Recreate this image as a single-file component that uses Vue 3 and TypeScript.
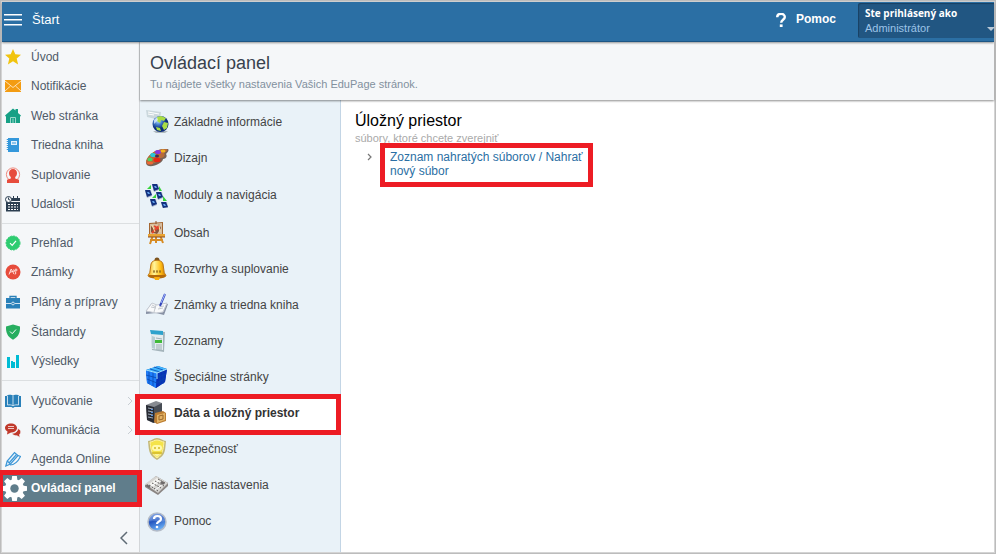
<script setup lang="ts">
interface NavItem {
  label: string
  icon: string
  more?: boolean
  active?: boolean
}

interface PanelItem {
  label: string
  icon: string
  tall?: boolean
  active?: boolean
}

const groups: NavItem[][] = [
  [
    {
      label: 'Úvod',
      icon: '<path fill="#f1c40f" d="M8 0l2.3 5.3 5.7.5-4.300 3.800 1.400 5.900L8 12.300 2.900 15.500l1.400-5.900L0 5.800l5.700-.5z"/>',
    },
    {
      label: 'Notifikácie',
      icon: '<path fill="#f39c12" d="M0 2h16v12H0z"/><path fill="none" stroke="#fff3df" stroke-width=".8" d="M0 3l8 6.500L16 3M0 13l5.500-5M16 13l-5.500-5"/>',
    },
    {
      label: 'Web stránka',
      icon: '<path fill="#16a085" d="M8 .5l2.500 2V1H13v4l3 2.600-1 1.200V15H1V8.800L0 7.600z"/><path fill="none" stroke="#9bd8cb" d="M5.500 15V9.500h5V15M8 10.500v4.500"/>',
    },
    {
      label: 'Triedna kniha',
      icon: '<path fill="#3498db" d="M3 1h11v14H3z"/><path stroke="#3498db" stroke-width="1.500" stroke-dasharray="1 1" d="M2.500 2v12"/><path fill="#e3f1fb" d="M6 4h6v4H6z"/><path fill="#8cc4ec" d="M7 5h4v2H7z"/>',
    },
    {
      label: 'Suplovanie',
      icon: '<circle cx="8" cy="7.500" r="6.600" fill="none" stroke="#ee8a7e"/><path fill="#e74c3c" d="M8 2c2.500 0 4 1.700 4 4 0 2-.7 3.200-1.800 4v1.500l3.800 1.300V16H2v-3.200l3.800-1.300V10C4.700 9.200 4 8 4 6c0-2.300 1.500-4 4-4z"/>',
    },
    {
      label: 'Udalosti',
      icon: '<path fill="#2c3e50" d="M2 2h13v3H2zM1 6h14v9.500H1z"/><path stroke="#fff" d="M3 8.500h10M3 11h10M3 13.500h10" stroke-dasharray="2 1"/><circle cx="3.500" cy="3.500" r="3" fill="#f5f7f9" stroke="#2c3e50"/><path stroke="#2c3e50" fill="none" d="M3.500 1.500v2l1.500.5M8.500 0v3M12.500 0v3"/>',
    },
  ],
  [
    {
      label: 'Prehľad',
      icon: '<circle cx="8" cy="8" r="7" fill="#2ecc71" stroke="#2ecc71" stroke-dasharray="2 1"/><path fill="none" stroke="#fff" stroke-width="1.200" d="M5 8.200l2.200 2.200L11 5.800"/>',
    },
    {
      label: 'Známky',
      icon: '<circle cx="8" cy="8" r="7.500" fill="#e74c3c"/><path fill="none" stroke="#ffe1dd" d="M4 10.500l2.200-5.500L9 10M4.800 8.300L9.200 7M8.500 5.500L11 9l-1 1.500M9.500 6h3M11 4.500v3"/>',
    },
    {
      label: 'Plány a prípravy',
      icon: '<path fill="none" stroke="#2980b9" stroke-width="1.300" d="M5 4V2.500h6V4"/><path fill="#2980b9" d="M1 4h14v10.500H1z"/><path stroke="#cfe2f0" fill="none" d="M1 9.500h5M10 9.500h5"/><circle cx="8" cy="9.500" r="1.400" fill="none" stroke="#cfe2f0"/>',
    },
    {
      label: 'Štandardy',
      icon: '<path fill="#27ae60" d="M8 .5l7 2c.3 6-1.500 10.500-7 13.200C2.500 13 .7 8.500 1 2.500z"/><path fill="none" stroke="#fff" d="M5 7.500l2.200 2.200L11 5.500"/>',
    },
    {
      label: 'Výsledky',
      icon: '<path fill="#00bcd4" d="M2 4h3v11H2zM6 8h2v7H6zM8 9h2v6H8zM11 2h3v13h-3z"/>',
    },
  ],
  [
    {
      label: 'Vyučovanie',
      more: true,
      icon: '<path fill="#2980b9" d="M0 3h1.500L3 2c2-.6 4-.3 5 .8C9 1.700 11 1.400 13 2l1.500 1H16v11H9.500L8 15l-1.500-1H0z"/><path fill="none" stroke="#d5e7f3" stroke-width=".9" d="M2.500 3v9c2-.4 4-.2 5.500.8 1.500-1 3.500-1.200 5.500-.8V3M8 3v9.500"/>',
    },
    {
      label: 'Komunikácia',
      more: true,
      icon: '<path fill="#c0392b" d="M6 1.500c3.500 0 6 2 6 4.500s-2.500 4.500-6 4.500L2 12.500l.5-3C1 8.700 0 7.500 0 6c0-2.500 2.500-4.500 6-4.500z"/><path stroke="#f0c8c4" d="M3 4.500h6M3 6.500h6"/><path fill="#c0392b" stroke="#f5f7f9" stroke-width=".7" d="M12.800 6.500c2 .7 3 2 3 3.500 0 1-.5 1.800-1.300 2.500l.5 3-3-1.700c-2.500.2-4.500-.8-5-2.500 3.500 0 5.800-2 5.800-4.800z"/>',
    },
    {
      label: 'Agenda Online',
      icon: '<path fill="#e6f2fb" stroke="#3c96d6" stroke-width="1.200" d="M.8 15l1.400-5L9.500 1.500 13 4.500 5.500 13z"/><path fill="none" stroke="#3c96d6" stroke-width="1.200" d="M5 14c5 0 8-3.500 10.500-8.500L13 4.500M2.200 10L5.500 13M4.500 11.500l7-8"/>',
    },
    {
      label: 'Ovládací panel',
      active: true,
      icon: '<g fill="#fff"><circle cx="8" cy="8" r="6"/><path d="M6.500 0h3l.4 3H6.100zM6.500 16h3l.4-3H6.100zM0 6.500v3l3 .4V6.100zM16 6.500v3l-3 .4V6.100zM1.300 3.400l2.100-2.100 2.500 1.900-2.700 2.700zM14.700 12.600l-2.100 2.100-2.500-1.900 2.700-2.700zM12.600 1.300l2.100 2.100-1.900 2.500-2.700-2.700zM3.400 14.700l-2.100-2.100 1.900-2.500 2.700 2.700z"/></g><circle cx="8" cy="8" r="2.700" fill="#607d8b"/>',
    },
  ],
]

const panelItems: PanelItem[] = [
  {
    label: 'Základné informácie',
    icon: '<defs><radialGradient id="globe" cx=".35" cy=".3"><stop stop-color="#bfe2ff"/><stop offset=".5" stop-color="#437ccc"/><stop offset="1" stop-color="#0b2c79"/></radialGradient></defs><path fill="#cbd8dd" d="M1 0l15 2-1 8L2 7z"/><path stroke="#fff" d="M3 2l11 2M3 4l6 1"/><path fill="#aeb9bd" d="M8 21h15l-3 2h-9z"/><circle cx="15.500" cy="14" r="8" fill="url(#globe)"/><path fill="#a9dd45" d="M12 7l4-1 5 2-2 3-3-1-1 3-3-2zM19 12l4 1-1 5-3 2-2-4zM11 17l4 1 1 3-4-1z"/><path fill="#eef8ff" opacity=".7" d="M9 10l3-3 1 3-4 4z"/>',
  },
  {
    label: 'Dizajn',
    icon: '<path fill="#776256" d="M1 17C2 9 11 2 22 3c3 0 1 3-1 5 2 3-1 5-3 5 0 5-16 11-17 4z"/><path fill="#b86b38" d="M1 15C3 8 12 2 22 3c1 1-1 3-3 4 2 3-1 5-4 5-1 5-14 9-14 3z"/><ellipse cx="5" cy="13.500" rx="2.500" ry="2" fill="#4fcf62"/><ellipse cx="8" cy="9" rx="2.800" ry="2" fill="#28c8d8"/><ellipse cx="13" cy="6" rx="3" ry="2" fill="#8637de"/><ellipse cx="18" cy="5" rx="2.500" ry="1.500" fill="#f1b51d"/><ellipse cx="12" cy="14" rx="3.500" ry="2.200" fill="#e92713"/><ellipse cx="5" cy="17" rx="3" ry="1.500" fill="#ef6734"/><ellipse cx="12" cy="10" rx="2" ry="1.500" fill="#452e54"/>',
  },
  {
    label: 'Moduly a navigácia',
    tall: true,
    icon: '<g fill="#a9b5cc"><path d="M7 1l6-1 1 6-5 2zM0 7l6-1 1 6-5 2zM11 9l6-1 1 6-5 2zM5 16l6-1 1 6-5 2zM16 19l6-1 1 6-5 1z"/></g><g fill="#12317f"><path d="M7 0h5l2 5-5 2zM0 6h5l2 5-5 2zM11 8h5l2 5-5 2zM5 15h5l2 5-5 2zM16 18h5l2 5-5 1z"/></g><g fill="#61a1ec"><path d="M9 2h2l1 2h-2zM2 8h2l1 2H3zM13 10h2l1 2h-2zM7 17h2l1 2H8zM18 20h2l1 2h-2z"/></g><g fill="#37d43b"><path d="M2 5l4-4v4zM14 2l3 5h-3zM7 14l4-4v4zM18 12l4 5h-4z"/></g>',
  },
  {
    label: 'Obsah',
    icon: '<path fill="none" stroke="#d78c24" stroke-width="2" d="M8 14L5 23M15 14l3 8M11 13v9M5 19h13"/><path fill="#a46631" d="M4 2l14-1v14H4z"/><path fill="#d7bea0" d="M5 3l12-1v11L5 14z"/><path fill="#87553e" d="M6 5l5 4 3-6 2 4-4 6-6-2z"/><path stroke="#e3442b" stroke-width="2" d="M9 5l5 3M7 12l7-7"/><path stroke="#f6e1a3" d="M7 4l3 7M14 4l1 7"/><path fill="#eaa432" d="M3 13h17v3H3z"/><path stroke="#894b22" d="M3 16h17M11 0v3"/>',
  },
  {
    label: 'Rozvrhy a suplovanie',
    icon: '<defs><linearGradient id="bell"><stop stop-color="#fba30a"/><stop offset=".35" stop-color="#fff69c"/><stop offset=".7" stop-color="#ffbd16"/><stop offset="1" stop-color="#c97400"/></linearGradient></defs><circle cx="12" cy="3" r="2.500" fill="#7b521c"/><path fill="url(#bell)" stroke="#ba7615" d="M6 7c1-5 11-5 12 0l1 7c0 3 2 3 2 5-2 2-16 2-18 0 0-2 2-2 2-5z"/><path fill="#b36a0c" d="M4 18h16v2c-4 2-12 2-16 0z"/><path stroke="#8c641a" stroke-dasharray="2 1" d="M8 14h9M8 15h8"/><path fill="#f9ad10" d="M9 20h6l-1 3h-4z"/>',
  },
  {
    label: 'Známky a triedna kniha',
    icon: '<path fill="#8992a5" d="M1 18l5-7 6 1 11-1-4 11-8-2-10 1z"/><path fill="#f9fafb" stroke="#c5cad2" d="M1 18l6-8 5 2 10-2-4 9-7 1z"/><path stroke="#c3c8ce" d="M7 12l4 2M6 14l5 1M14 14l5-1M13 16l5-1M11 12l-2 7"/><path stroke="#3446ba" stroke-width="2" d="M20 1l-5 12"/><path stroke="#a1b7ff" d="M20 1l-4 9"/>',
  },
  {
    label: 'Zoznamy',
    icon: '<path fill="#a4b4bb" d="M6 2l14 1-1 20-12-2z"/><path fill="#e4edef" d="M6 2l12 1v18L7 20z"/><path fill="#2ea2cc" d="M5 1l13 1v4L6 5z"/><path fill="#b7cdd3" d="M7 7l3 1v12l-3-1z"/><path stroke="#9eafb6" d="M11 9l6 1M11 16h6M11 18h6M11 20h6"/><path fill="#40ba39" d="M10 11h7v3h-7z"/>',
  },
  {
    label: 'Špeciálne stránky',
    icon: '<path fill="#0645b5" d="M1 5l12-4 9 3-2 13-9 6L2 18z"/><path fill="#42b7ff" d="M1 5l12-4 9 3-10 4z"/><path fill="#1d7dfa" d="M1 5l11 3-1 15-9-5z"/><path fill="#0831b8" d="M12 8l10-4-2 13-9 6z"/><path fill="none" stroke="#0746b0" stroke-width=".8" d="M5 4l10 3v13M9 2l9 3v14M4 6v13M8 7v14M1 10l11 3 9-4M2 14l10 4 8-5"/><path stroke="#a4e3ff" d="M1 5l11 3 10-4M12 8v6"/>',
  },
  {
    label: 'Dáta a úložný priestor',
    active: true,
    icon: '<path fill="#878b91" d="M1 4l10-4 6 2v16L8 22l-6-3z"/><path fill="#282b33" d="M1 4l8 2v16l-7-3z"/><path fill="#484d55" d="M9 6l8-4v16l-8 4z"/><path stroke="#9ea9b8" d="M3 7l5 1M3 10l5 1M3 13l5 1M3 16l5 1"/><path stroke="#5790db" stroke-width="2" stroke-dasharray="1 2" d="M7 8v9"/><path fill="#bc7d32" d="M10 12l8-2 3 2v8l-9 3-3-2z"/><path fill="#e3b465" d="M12 14l8-2v7l-8 3z"/><path fill="none" stroke="#9b672d" d="M14 15l4-1v4l-4 1z"/>',
  },
  {
    label: 'Bezpečnosť',
    icon: '<path fill="#c3b877" d="M3 4c4 0 5-3 9-3s6 3 9 3c-1 9 0 14-9 19C3 18 4 12 3 4z"/><path fill="#f4e34a" stroke="#fff3a1" d="M5 5c3 0 4-2 7-2s5 2 7 2c-1 8-1 12-7 16-6-4-6-9-7-16z"/><rect x="7" y="8" width="10" height="6" rx="3" fill="#fff9ad"/><path stroke="#d3b929" stroke-width="1.500" d="M9 11h2M13 11h2M7 16h10"/><path fill="#f9f2a0" d="M9 17h6l-3 3z"/>',
  },
  {
    label: 'Ďalšie nastavenia',
    icon: '<path fill="#8a8583" d="M0 12L11 3l12 7v3L13 22 0 14z"/><path fill="#d6d5d2" d="M0 11L11 3l12 7-10 10z"/><path fill="#f2f1ed" d="M4 11l8-6 4 3-8 6z"/><path stroke="#5d5a58" stroke-dasharray="2 1" d="M4 12l9 6M7 10l9 5M10 8l9 5M13 6l7 4"/><path stroke="#fff" d="M5 14l8-6M10 17l8-6"/><path fill="#6d6969" d="M2 11l4 3-2 1-3-2zM17 8l3 2-2 2-3-2z"/>',
  },
  {
    label: 'Pomoc',
    icon: '<defs><linearGradient id="help" x2=".4" y2="1"><stop stop-color="#8fb0ea"/><stop offset=".5" stop-color="#2557c0"/><stop offset="1" stop-color="#68adf4"/></linearGradient></defs><circle cx="12" cy="13" r="9" fill="url(#help)" stroke="#b4bcc8" stroke-width="1.500"/><path fill="#9cb9ee" opacity=".35" d="M4 12c1-10 15-10 16 0-5 2-11-2-16 0z"/><path fill="none" stroke="#fff" stroke-width="2.200" d="M9 10c0-4 7-4 7 0 0 3-4 2-4 5"/><circle cx="12" cy="18" r="1.300" fill="#fff"/>',
  },
]
</script>

<template>
  <div class="page">
    <header class="topbar">
      <button class="menu" type="button" aria-label="Menu">
        <span></span><span></span><span></span>
      </button>
      <a class="start" href="#">Štart</a>
      <a class="help" href="#">
        <svg viewBox="0 0 10 14" aria-hidden="true">
          <path d="M1.200 4.200C1.200-.2 8.800-.2 8.800 4c0 2.800-3.600 2.800-3.600 5.800" fill="none" stroke="#fff" stroke-width="2.400" />
          <path d="M3.800 11.400h2.800V14H3.800z" fill="#fff" />
        </svg>
        <span>Pomoc</span>
      </a>
      <button class="account" type="button">
        <span class="account-title">Ste prihlásený ako</span>
        <span class="account-name">Administrátor</span>
        <svg class="caret" viewBox="0 0 8 4" aria-hidden="true"><path d="M0 0h8L4 4z" fill="#b9c8d6" /></svg>
      </button>
    </header>

    <div class="body">
      <nav class="sidebar">
        <ul v-for="(group, index) in groups" :key="index" class="group">
          <li v-for="item in group" :key="item.label">
            <a href="#" class="nav-link" :class="{ active: item.active }">
              <svg class="nav-icon" viewBox="0 0 16 16" fill="none" aria-hidden="true" v-html="item.icon"></svg>
              <span>{{ item.label }}</span>
              <svg v-if="item.more" class="more" viewBox="0 0 6 10" aria-hidden="true">
                <path d="M1 1l4 4-4 4" fill="none" stroke="#c8ced3" />
              </svg>
            </a>
          </li>
        </ul>
        <button class="collapse" type="button" aria-label="Zbaliť">
          <svg viewBox="0 0 8 14" aria-hidden="true"><path d="M7 1L1 7l6 6" fill="none" stroke="#5f6b75" stroke-width="1.500" /></svg>
        </button>
      </nav>

      <main class="main">
        <div class="heading">
          <h1>Ovládací panel</h1>
          <p>Tu nájdete všetky nastavenia Vašich EduPage stránok.</p>
        </div>
        <div class="columns">
          <nav class="panel">
            <a v-for="item in panelItems" :key="item.label" href="#" class="panel-link" :class="{ active: item.active, tall: item.tall }">
              <svg viewBox="0 0 24 24" fill="none" aria-hidden="true" v-html="item.icon"></svg>
              <span>{{ item.label }}</span>
            </a>
          </nav>
          <section class="content">
            <h2>Úložný priestor</h2>
            <p>súbory, ktoré chcete zverejniť</p>
            <div class="entry">
              <svg viewBox="0 0 5 8" aria-hidden="true"><path d="M1 1l3 3-3 3" fill="none" stroke="#777" stroke-width="1.200" /></svg>
              <a href="#">Zoznam nahratých súborov / Nahrať nový súbor</a>
            </div>
          </section>
        </div>
      </main>
    </div>
  </div>
</template>

<style>
body {
  margin: 0;
}
</style>

<style scoped>
* {
  box-sizing: border-box;
}

.page {
  display: flex;
  flex-direction: column;
  min-height: 100vh;
  border: 1px solid #bcbcbc;
  outline: 1px solid #d4d4d4;
  outline-offset: -2px;
  padding: 1px;
  background: #fff;
  font-family: "Liberation Sans", Arial, sans-serif;
  font-size: 12px;
  color: #444;
}

a {
  color: inherit;
  text-decoration: none;
}

button {
  border: 0;
  padding: 0;
  background: none;
  font: inherit;
  cursor: pointer;
}

h1,
h2,
p,
ul {
  margin: 0;
  padding: 0;
  font-weight: normal;
}

.topbar {
  display: flex;
  align-items: stretch;
  height: 40px;
  background: #2b6fa4;
  border-bottom: 1px solid #1c5685;
  box-shadow: 0 1px 2px rgba(0, 0, 0, 0.4);
  position: relative;
  z-index: 2;
  color: #fff;
}

.menu {
  display: flex;
  flex-direction: column;
  justify-content: center;
  gap: 4px;
  width: 18px;
  margin: 0 10px 4px 2px;
}

.menu span {
  height: 1px;
  background: #fff;
  box-shadow: 0 1px 0 rgba(255, 255, 255, 0.5);
}

.start {
  font-size: 13px;
  line-height: 35px;
}

.help {
  display: flex;
  align-items: center;
  gap: 10px;
  margin: 0 22px 5px auto;
  font-weight: bold;
}

.help svg {
  width: 10px;
  height: 14px;
  margin-top: 2px;
}

.account {
  position: relative;
  display: flex;
  flex-direction: column;
  gap: 1px;
  width: 136px;
  margin: 1px 0 3px;
  padding: 3px 7px;
  border-radius: 2px 0 0 2px;
  background: #215682;
  box-shadow: inset 1px 1px 1px rgba(0, 0, 0, 0.25);
  text-align: left;
}

.account-title {
  font-family: "Open Sans", sans-serif;
  font-size: 10px;
  font-weight: bold;
  line-height: 14px;
  color: #fff;
}

.account-name {
  font-size: 11px;
  line-height: 14px;
  color: #9dc4e8;
}

.caret {
  position: absolute;
  right: -1px;
  bottom: 7px;
  width: 8px;
  height: 4px;
}

.body {
  display: flex;
  flex: 1;
}

.sidebar {
  display: flex;
  flex-direction: column;
  flex: 0 0 138px;
  border-right: 1px solid #d3d6d9;
  background: #f5f7f9;
  color: #4f5a68;
}

.group {
  display: grid;
  grid-auto-rows: 1fr;
  list-style: none;
  height: 157px;
  padding: 4px 0;
  border-bottom: 1px solid #dcdfe1;
}

.group:first-child {
  height: 182px;
  padding-top: 0;
}

.group:nth-child(3) {
  height: 122px;
  padding: 5px 0 0;
  border: 0;
}

.nav-link {
  position: relative;
  display: flex;
  align-items: center;
  gap: 10px;
  height: 100%;
  padding: 0 6px 0 3px;
}

.nav-icon {
  flex: none;
  width: 16px;
  height: 16px;
}

.more {
  width: 6px;
  height: 10px;
  margin-left: auto;
}

.nav-link.active {
  gap: 4px;
  padding-left: 0;
  background: #607d8b;
  color: #fff;
  font-weight: bold;
}

.nav-link.active .nav-icon {
  width: 25px;
  height: 25px;
}

.nav-link.active::after,
.panel-link.active::after,
.entry a::after {
  content: "";
  position: absolute;
  inset: -4px -3px -4px -4px;
  border: 5px solid #ed1c24;
  z-index: 3;
  pointer-events: none;
}

.collapse {
  margin: auto 11px 7px auto;
}

.collapse svg {
  display: block;
  width: 8px;
  height: 14px;
}

.main {
  display: flex;
  flex-direction: column;
  flex: 1;
  min-width: 0;
}

.heading {
  position: relative;
  z-index: 1;
  height: 58px;
  padding: 11px 10px 0;
  background: #f5f7f9;
  box-shadow: 0 1px 2px rgba(0, 0, 0, 0.45);
}

h1 {
  font-size: 18px;
  line-height: 20px;
  color: #38424e;
}

.heading p {
  margin-top: 4px;
  font-size: 11px;
  line-height: 14px;
  color: #82909e;
}

.columns {
  display: flex;
  flex: 1;
}

.panel {
  flex: 0 0 201px;
  padding-top: 4px;
  border-right: 1px solid #c3d5e5;
  background: #e9f2f8;
}

.panel-link {
  position: relative;
  display: flex;
  align-items: center;
  gap: 5px;
  height: 36px;
  padding-left: 5px;
}

.panel-link.tall {
  height: 39px;
}

.panel-link svg {
  flex: none;
  width: 24px;
  height: 24px;
}

.panel-link span {
  padding-bottom: 1px;
}

.panel-link.active {
  background: #fff;
  font-weight: bold;
  color: #333;
}

.panel-link.active::after {
  inset: -1px -1px -4px -5px;
}

.content {
  flex: 1;
  padding: 11px 14px;
}

h2 {
  font-size: 16px;
  line-height: 20px;
  color: #000;
}

.content p {
  font-size: 11px;
  line-height: 14px;
  color: #aaa;
}

.entry {
  display: flex;
  gap: 18px;
  max-width: 240px;
  padding: 5px 0 0 12px;
}

.entry svg {
  flex: none;
  width: 5px;
  height: 8px;
  margin-top: 3px;
}

.entry a {
  position: relative;
  color: #2b6fa4;
  line-height: 14px;
}

.entry a::after {
  inset: -7px 2px -9px -10px;
}
</style>
